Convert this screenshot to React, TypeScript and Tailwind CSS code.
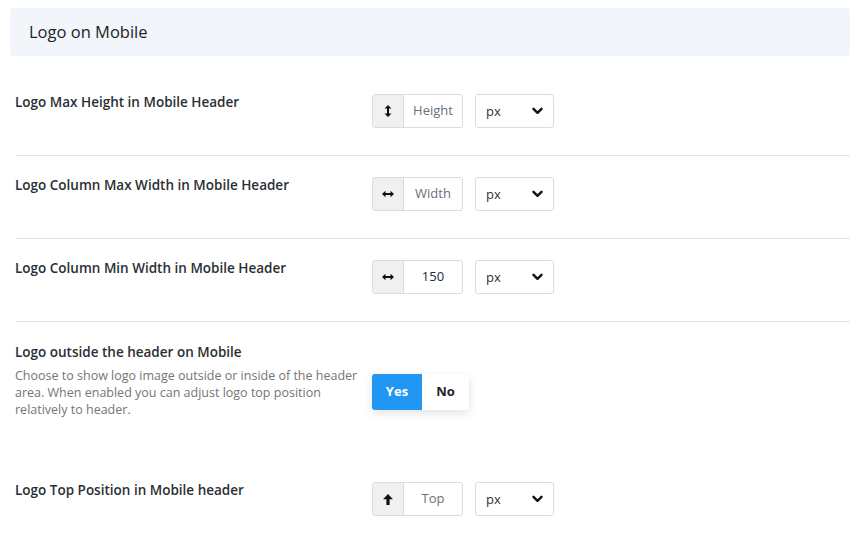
import type { ReactNode } from "react";

function VArrow() {
  return (
    <svg width="8" height="12" viewBox="0 0 8 12" fill="#111">
      <path d="M4 0 L7.5 3.5 H5 V8.5 H7.5 L4 12 L0.5 8.5 H3 V3.5 H0.5 Z" />
    </svg>
  );
}

function HArrow() {
  return (
    <svg width="12" height="8" viewBox="0 0 12 8" fill="#111">
      <path d="M0 4 L3.5 0.8 V3 H8.5 V0.8 L12 4 L8.5 7.2 V5 H3.5 V7.2 Z" />
    </svg>
  );
}

function UpArrow() {
  return (
    <svg width="10" height="11" viewBox="0 0 10 11" fill="#111">
      <path d="M5 0 L10 5.2 H6.6 V11 H3.4 V5.2 H0 Z" />
    </svg>
  );
}

function Chevron() {
  return (
    <svg width="11" height="8" viewBox="0 0 11 8" fill="none" stroke="#111" strokeWidth="2.4" strokeLinecap="round" strokeLinejoin="round">
      <path d="M1.5 1.8 L5.5 5.8 L9.5 1.8" />
    </svg>
  );
}

function UnitInput({ icon, value, placeholder }: { icon: ReactNode; value?: string; placeholder: string }) {
  return (
    <div className="flex items-center gap-[12px]">
      <div className="flex h-[34px] w-[91px] overflow-hidden rounded-[3px] border border-[#dcdcde]">
        <span className="flex w-[31px] shrink-0 items-center justify-center border-r border-[#dcdcde] bg-[#f0f0f1]">
          {icon}
        </span>
        <span
          className={
            value
              ? "flex flex-1 items-center justify-center text-[13px] text-[#1d2a3a]"
              : "flex flex-1 items-center justify-center text-[13px] text-[#6b6f78]"
          }
        >
          {value ?? placeholder}
        </span>
      </div>
      <div className="flex h-[34px] w-[79px] items-center justify-between rounded-[3px] border border-[#dcdcde] pl-[10px] pr-[10px] text-[13px] text-[#2c3338]">
        <span className="pt-[1px]">px</span>
        <Chevron />
      </div>
    </div>
  );
}

function Row({ label, children, divider = true }: { label: string; children: ReactNode; divider?: boolean }) {
  return (
    <div className={divider ? "flex border-b border-[#e5e5e5] pt-[21px] pb-[27px]" : "flex pt-[21px] pb-[27px]"}>
      <div className="w-[357px] shrink-0 text-[13.5px] font-semibold leading-[16px] text-[#2a2f35]">{label}</div>
      <div>{children}</div>
    </div>
  );
}

export default function App() {
  return (
    <div className="min-h-[537px] bg-white pt-[8px] font-['Open_Sans',sans-serif]">
      <div className="ml-[10px] flex h-[48px] items-center rounded-[3px] bg-[#f2f5f9] pl-[19px]">
        <h2 className="text-[16.5px] font-normal text-[#1e2327]">Logo on Mobile</h2>
      </div>

      <div className="pl-[15px] pt-[17px]">
        <Row label="Logo Max Height in Mobile Header">
          <UnitInput icon={<VArrow />} placeholder="Height" />
        </Row>
        <Row label="Logo Column Max Width in Mobile Header">
          <UnitInput icon={<HArrow />} placeholder="Width" />
        </Row>
        <Row label="Logo Column Min Width in Mobile Header">
          <UnitInput icon={<HArrow />} value="150" placeholder="Width" />
        </Row>

        <div className="flex pt-[21px]">
          <div className="w-[357px] shrink-0 pr-[14px]">
            <div className="text-[13.5px] font-semibold leading-[18px] text-[#2a2f35]">Logo outside the header on Mobile</div>
            <p className="mt-[6px] text-[12.5px] leading-[17px] text-[#757575]">
              Choose to show logo image outside or inside of the header area. When enabled you can adjust logo top position relatively to header.
            </p>
          </div>
          <div className="pt-[31px]">
            <div className="flex h-[36px] overflow-hidden rounded-[3px] shadow-[0_3px_10px_rgba(0,0,0,0.12)]">
              <span className="flex w-[50px] items-center justify-center bg-[#2196f3] text-[13px] font-bold text-white">Yes</span>
              <span className="flex w-[47px] items-center justify-center bg-white text-[13px] font-bold text-[#1e2327]">No</span>
            </div>
          </div>
        </div>

        <div className="pt-[43px]">
          <Row label="Logo Top Position in Mobile header" divider={false}>
            <UnitInput icon={<UpArrow />} placeholder="Top" />
          </Row>
        </div>
      </div>
    </div>
  );
}
